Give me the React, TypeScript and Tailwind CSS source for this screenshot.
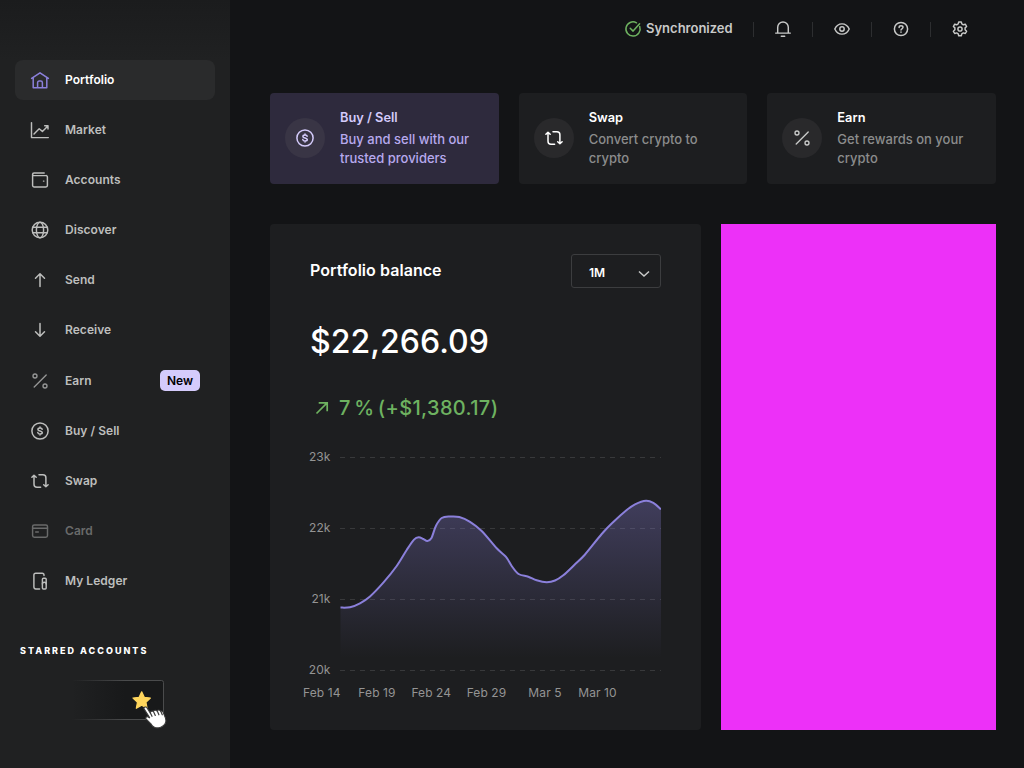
import type { ReactNode } from "react";

type IconProps = { size?: number; width?: number; className?: string };

function Svg({ size = 24, width = 1.45, className = "", children }: IconProps & { children: ReactNode }) {
  return (
    <svg
      width={size}
      height={size}
      viewBox="0 0 24 24"
      fill="none"
      stroke="currentColor"
      strokeWidth={width}
      strokeLinecap="round"
      strokeLinejoin="round"
      className={"shrink-0 " + className}
    >
      {children}
    </svg>
  );
}

const HomeIcon = () => (
  <Svg width={1.5} className="text-[#8b80db]">
    <path d="M3.6 10.4 12 4.8l8.4 5.6M5.2 9.6v10.1h13.6V9.6M9.6 19.700v-5a1.600 1.600 0 0 1 1.600-1.600h1.600a1.600 1.600 0 0 1 1.600 1.600v5" />
  </Svg>
);
const MarketIcon = () => (
  <Svg>
    <path d="M3.500 4.600v15h16.800M6 16l5.200-5.200 3.200 2.600L19.900 7.900M16.700 7.700H20v3.300" />
  </Svg>
);
const WalletIcon = () => (
  <Svg>
    <path d="M16.200 4.900H6a1.400 1.400 0 0 0-1.400 1.400v11.300c0 .8.600 1.400 1.400 1.400h11.900c.8 0 1.500-.6 1.500-1.400V9a1.400 1.400 0 0 0-1.500-1.400H6a1.300 1.300 0 0 1-1.400-1.300" />
    <path d="M15.500 13.100h.4" />
  </Svg>
);
const GlobeIcon = () => (
  <Svg>
    <circle cx="12" cy="12" r="7.800" />
    <ellipse cx="12" cy="12" rx="3.600" ry="7.800" />
    <path d="M4.800 9.300h14.400M4.800 14.700h14.400" />
  </Svg>
);
const UpIcon = () => (
  <Svg width={1.5}>
    <path d="M12 18.400V5.900M7.500 10.200 12 5.700l4.500 4.500" />
  </Svg>
);
const DownIcon = () => (
  <Svg width={1.5}>
    <path d="M12 5.600v12.500M7.500 13.800l4.500 4.500 4.500-4.500" />
  </Svg>
);
const PercentIcon = ({ className = "" }: IconProps) => (
  <Svg width={1.35} className={className}>
    <path d="M6.200 18 18.200 5.900" />
    <circle cx="7" cy="7" r="2" />
    <circle cx="17" cy="17" r="2" />
  </Svg>
);
const DollarIcon = () => (
  <Svg width={1.5}>
    <circle cx="12" cy="12" r="8.100" />
    <path d="M14.200 10.300c-.2-.8-1-1.300-2.100-1.300-1.300 0-2.200.6-2.200 1.500 0 2.100 4.400.9 4.400 3.100 0 .9-.9 1.500-2.200 1.500-1.200 0-2.100-.6-2.300-1.500M12 8.100V9m0 6.100v.9" />
  </Svg>
);
const SwapIcon = () => (
  <Svg width={1.5}>
    <path d="M3.900 8.300 6 6.200l2.200 2.100M6 6.400v8.900a3 3 0 0 0 3 3h3.600M11 5.800h3.900a3 3 0 0 1 3 3v8.900M15.700 15.700l2.200 2.100 2.200-2.100" />
  </Svg>
);
const CardIcon = () => (
  <Svg>
    <rect x="4.600" y="5.900" width="14.900" height="12.300" rx="1.700" />
    <path d="M4.600 9.300h14.900M7.700 12.900h2.600" />
  </Svg>
);
const DeviceIcon = () => (
  <Svg>
    <path d="M11.600 19.900H7.700A1.800 1.800 0 0 1 5.900 18.100V6A1.800 1.800 0 0 1 7.700 4.200h6.500A1.800 1.800 0 0 1 16 6v.4" />
    <rect x="14.400" y="9.300" width="3.800" height="10.600" rx="1" />
    <path d="M14.400 15a1.900 1.700 0 0 1 3.800 0" />
  </Svg>
);
const CheckIcon = () => (
  <Svg size={24} width={1.500} className="text-[#6eb260]">
    <path d="M18.700 9.600a7.100 7.100 0 1 1-3.200-3.800M9.200 11.300l2.900 2.800 6.500-7.300" />
  </Svg>
);
const BellIcon = () => (
  <Svg>
    <path d="M4.700 16.100h14.600M6.700 16.100V10.300a5.300 5.300 0 0 1 10.600 0v5.800M10.300 19.200h3.400" />
  </Svg>
);
const EyeIcon = () => (
  <Svg>
    <path d="M4.800 12C6.200 8.900 8.800 6.900 12 6.900s5.800 2 7.200 5.100c-1.400 3.100-4 5.100-7.200 5.100S6.200 15.100 4.800 12Z" />
    <circle cx="12" cy="12" r="2.200" />
  </Svg>
);
const HelpIcon = () => (
  <Svg width={1.500}>
    <circle cx="12" cy="12" r="6.600" />
    <path d="M10.100 10.400c0-1.100.9-1.700 1.900-1.700s2 .6 2 1.600c0 1.500-2 1.400-2 2.700M12 15.100v.1" />
  </Svg>
);
const GearIcon = () => (
  <Svg>
    <path d="M10.700 4.900h2.600l.5 2 1.500.9 2-.6 1.300 2.300-1.500 1.400v1.900l1.500 1.500-1.300 2.200-2-.6-1.500.9-.5 2h-2.600l-.5-2-1.500-.9-2 .6-1.300-2.200 1.500-1.500v-1.900L5.400 9.500l1.300-2.300 2 .6 1.500-.9Z" />
    <circle cx="12" cy="12" r="2.100" />
  </Svg>
);

type NavItem = { label: string; icon: ReactNode; state?: "active" | "disabled"; badge?: string };

const nav: NavItem[] = [
  { label: "Portfolio", icon: <HomeIcon />, state: "active" },
  { label: "Market", icon: <MarketIcon /> },
  { label: "Accounts", icon: <WalletIcon /> },
  { label: "Discover", icon: <GlobeIcon /> },
  { label: "Send", icon: <UpIcon /> },
  { label: "Receive", icon: <DownIcon /> },
  { label: "Earn", icon: <PercentIcon className="opacity-75" />, badge: "New" },
  { label: "Buy / Sell", icon: <DollarIcon /> },
  { label: "Swap", icon: <SwapIcon /> },
  { label: "Card", icon: <CardIcon />, state: "disabled" },
  { label: "My Ledger", icon: <DeviceIcon /> },
];

function NavRow({ item }: { item: NavItem }) {
  const tone =
    item.state === "active"
      ? "bg-[#2a2b2c] text-white"
      : item.state === "disabled"
        ? "text-[#696a6a]"
        : "text-[#bdbebd]";
  return (
    <a className={`flex items-center rounded-lg pr-[15px] pl-[13px] ${item.badge ? "h-[41px]" : "h-10"} ${tone}`}>
      {item.icon}
      <span className={`ml-[13px] text-[12px] font-semibold tracking-[0.04px] ${item.badge ? "pt-px" : ""}`}>{item.label}</span>
      {item.badge && (
        <span className="ml-auto flex h-[21px] w-10 items-center justify-center rounded-[5px] bg-[#d4cbfb] text-[12px] font-semibold text-black">
          {item.badge}
        </span>
      )}
    </a>
  );
}

function StarredHint() {
  return (
    <svg width="110" height="60" viewBox="66 674 110 60" className="ml-[66px] block">
      <defs>
        <linearGradient id="boxFill" gradientUnits="userSpaceOnUse" x1="72" x2="125" y1="0" y2="0">
          <stop offset="0" stopColor="#18191a" stopOpacity="0" />
          <stop offset="1" stopColor="#18191a" />
        </linearGradient>
        <linearGradient id="boxLine" gradientUnits="userSpaceOnUse" x1="72" x2="125" y1="0" y2="0">
          <stop offset="0" stopColor="#4a4b4c" stopOpacity="0" />
          <stop offset="1" stopColor="#4a4b4c" />
        </linearGradient>
      </defs>
      <path d="M72 680.5h89.500a2 2 0 0 1 2 2v35a2 2 0 0 1-2 2H72Z" fill="url(#boxFill)" />
      <path d="M72 680.5h89.500a2 2 0 0 1 2 2v35a2 2 0 0 1-2 2H72" fill="none" stroke="url(#boxLine)" />
      <path
        d="m141.700 691.800 2.600 5.500 6.100.7-4.500 4.200 1.200 6.100-5.400-3.100-5.400 3.100 1.200-6.100-4.500-4.200 6.100-.7Z"
        fill="#ffd65d"
        stroke="#ffd65d"
        strokeWidth="1.200"
        strokeLinejoin="round"
      />
      <path
        d="M144.600 707.300c1-.7 2-.2 2.600.8l3.100 4.900c.3-1.700 1.800-2.400 3-1.500.7-1.500 2.700-1.700 3.700-.5.900-1.300 2.700-1.300 3.500.2 1.500-.7 2.500.3 2.900 1.700l2 5c1.500 4-.5 7.900-4.600 9.400-4.100 1.400-7.400.4-9.600-3.100l-5-5.100c-1.100-1.300.4-3 2-2.100l1.600.9-5.600-8.800c-.5-.8-.3-1.500.4-1.900Z"
        fill="#fff"
        stroke="#3b3b3b"
        strokeWidth="1.100"
      />
      <path d="m150.400 713 1.600 3.300M153.600 711.800l1.700 3.600M157.400 711.300l1.500 3.500M160.900 711.600l1.400 3.200" stroke="#3b3b3b" strokeWidth="1.200" strokeLinecap="round" />
    </svg>
  );
}

function Sidebar() {
  return (
    <aside className="flex w-[230px] shrink-0 flex-col bg-[linear-gradient(#1b1c1d,#202122_60px)] pt-[60px]">
      <nav className="flex flex-col gap-2.5 px-[15px]">
        {nav.map((item) => (
          <NavRow key={item.label} item={item} />
        ))}
      </nav>
      <h2 className="mt-[42px] ml-5 h-4 text-[9px] leading-4 font-extrabold tracking-[2px] text-white">STARRED ACCOUNTS</h2>
      <div className="mt-[15px]">
        <StarredHint />
      </div>
    </aside>
  );
}

function TopBar() {
  const tools = [<BellIcon key="bell" />, <EyeIcon key="eye" />, <HelpIcon key="help" />, <GearIcon key="gear" />];
  return (
    <header className="flex h-[58px] items-center justify-end pr-[35px] text-[#c9cac9]">
      <CheckIcon />
      <span className="mr-5 ml-px w-[87px] text-[13px] font-semibold whitespace-nowrap">Synchronized</span>
      {tools.map((icon, i) => (
        <div key={i} className="flex h-[15px] w-[59px] items-center border-l border-[#2d2e30] pl-[17px]">
          {icon}
        </div>
      ))}
    </header>
  );
}

function ActionCard({ title, text, icon, accent }: { title: string; text: string; icon: ReactNode; accent?: boolean }) {
  return (
    <section
      className={`flex h-[91px] flex-1 items-center rounded pb-px pl-[15px] ${accent ? "bg-[#2e2a3d] text-[#d4cbfb]" : "bg-[#1d1e20] text-white"}`}
    >
      <div className={`flex size-10 shrink-0 items-center justify-center rounded-full ${accent ? "bg-[#393545]" : "bg-[#29292b]"}`}>
        {icon}
      </div>
      <div className="ml-[15px] w-[136px] text-[13px]">
        <h3 className="pt-px text-[12.8px] leading-[18px] font-semibold">{title}</h3>
        <p className={`mt-[3px] leading-[19px] font-medium ${accent ? "text-[#b7a9ed]" : "text-[#8b8c8c]"}`}>{text}</p>
      </div>
    </section>
  );
}

const balance: [number, number][] = [
  [340.5, 607.6], [350, 607.2], [360, 603.3], [370, 596.500], [383.300, 582.700], [396.700, 566], [406.700, 550],
  [414, 539.600], [418.700, 537.200], [423.300, 539], [427.300, 541], [431.300, 538.300], [436, 525.800],
  [441.700, 518], [450, 516.500], [459.300, 517], [470, 521.800], [481.700, 531], [496.700, 548.300],
  [506, 556.900], [511.700, 566], [518.500, 574], [528.300, 576.700], [536.700, 580.300], [546.700, 582.200],
  [555, 580.500], [563.300, 575.300], [575, 564.300], [585, 554.500], [601.700, 534], [613.300, 522],
  [626.700, 510], [635, 504.300], [646, 500.700], [653.300, 502.900], [661, 509.300],
];

function smooth(points: [number, number][]) {
  let d = `M${points[0][0]} ${points[0][1]}`;
  for (let i = 0; i < points.length - 1; i++) {
    const a = points[Math.max(i - 1, 0)];
    const b = points[i];
    const c = points[i + 1];
    const e = points[Math.min(i + 2, points.length - 1)];
    d += `C${b[0] + (c[0] - a[0]) / 6} ${b[1] + (c[1] - a[1]) / 6} ${c[0] - (e[0] - b[0]) / 6} ${c[1] - (e[1] - b[1]) / 6} ${c[0]} ${c[1]}`;
  }
  return d;
}

function BalanceChart() {
  const line = smooth(balance);
  const ticks: [string, number][] = [["23k", 457.5], ["22k", 528.5], ["21k", 599.5], ["20k", 670.5]];
  const dates: [string, number][] = [
    ["Feb 14", 321.800], ["Feb 19", 377], ["Feb 24", 431.300], ["Feb 29", 486.500], ["Mar 5", 545], ["Mar 10", 597.500],
  ];
  return (
    <svg width="361" height="260" viewBox="300 445 361 260" className="-ml-[10px] block font-['Inter',sans-serif] text-[12px] tracking-[0.1px]">
      <defs>
        <linearGradient id="area" gradientUnits="userSpaceOnUse" x1="0" x2="0" y1="500" y2="658">
          <stop offset="0" stopColor="#8b80db" stopOpacity="0.320" />
          <stop offset="1" stopColor="#8b80db" stopOpacity="0" />
        </linearGradient>
      </defs>
      {ticks.map(([label, y]) => (
        <g key={label}>
          <path d={`M340 ${y}H661`} stroke="#38393b" strokeDasharray="5 5" />
          <text x="330.500" y={y + 3.500} textAnchor="end" fill="#949494">
            {label}
          </text>
        </g>
      ))}
      <path d={`${line}V670H340.5Z`} fill="url(#area)" />
      <path d={line} fill="none" stroke="#8b80db" strokeWidth="2" />
      {dates.map(([label, x]) => (
        <text key={label} x={x} y="696.500" textAnchor="middle" fill="#949494">
          {label}
        </text>
      ))}
    </svg>
  );
}

function BalancePanel() {
  return (
    <section className="flex h-[506px] w-[431px] flex-col rounded bg-[#1d1e20] px-10 pt-[30px]">
      <div className="flex h-[34px] items-center justify-between">
        <h1 className="pb-[2px] text-[16px] font-semibold tracking-[0.05px] text-white">Portfolio balance</h1>
        <button className="flex h-[34px] w-[90px] items-center justify-between rounded-[3px] border border-[#3c3d3f] pt-[3px] pr-[10px] pl-[17px] text-[12px] font-semibold text-white">
          1M
          <svg width="12" height="8" viewBox="0 0 12 8" fill="none" stroke="#c9cac9" strokeWidth="1.500" className="mt-[3px]">
            <path d="m1 1.500 5 4.500 5-4.500" />
          </svg>
        </button>
      </div>
      <div className="mt-[32px] h-11 text-[32px] leading-[44px] font-medium tracking-[0.05px] whitespace-nowrap text-white">$22,266.09</div>
      <div className="mt-[30px] flex h-7 items-center text-[20px] font-medium whitespace-nowrap text-[#6eb260]">
        <svg width="29" height="24" viewBox="0 0 29 24" fill="none" stroke="currentColor" strokeWidth="1.700">
          <path d="m6.500 17.500 10.600-10.600M8.700 6.800h8.500v8.500" />
        </svg>
        <span className="tracking-[0.35px] [word-spacing:-2.3px]">7 % (+$1,380.17)</span>
      </div>
      <div className="mt-[23px]">
        <BalanceChart />
      </div>
    </section>
  );
}

export default function App() {
  return (
    <div className="flex h-[768px] w-[1024px] overflow-hidden bg-[#131416] font-['Inter',sans-serif] antialiased">
      <Sidebar />
      <div className="flex flex-1 flex-col">
        <TopBar />
        <main className="mt-[35px] flex flex-col gap-10 pr-7 pl-10">
          <div className="flex gap-5">
            <ActionCard accent title="Buy / Sell" text="Buy and sell with our trusted providers" icon={<DollarIcon />} />
            <ActionCard title="Swap" text="Convert crypto to crypto" icon={<SwapIcon />} />
            <ActionCard title="Earn" text="Get rewards on your crypto" icon={<PercentIcon className="text-[#c9cac9]" />} />
          </div>
          <div className="flex gap-5">
            <BalancePanel />
            <div className="flex-1 bg-[#ed30f8]" />
          </div>
        </main>
      </div>
    </div>
  );
}
